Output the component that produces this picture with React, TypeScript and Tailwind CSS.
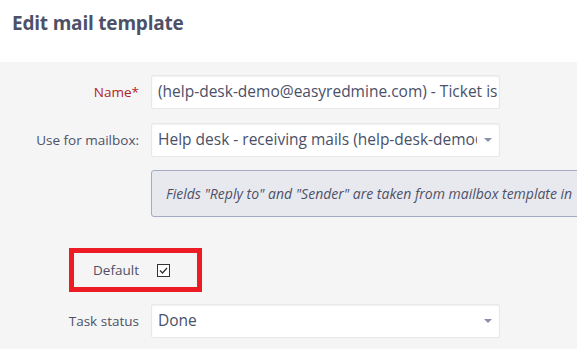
import React from "react";

const font = { fontFamily: "'Open Sans', 'Liberation Sans', sans-serif" };

const Caret = () => (
  <span className="absolute right-[7px] top-1/2 -translate-y-1/2 w-0 h-0 border-l-[4px] border-r-[4px] border-t-[4px] border-l-transparent border-r-transparent border-t-[#8a90a6]" />
);

const Field: React.FC<{ value: string; select?: boolean }> = ({ value, select }) => (
  <div className={`relative w-[349px] h-[34px] bg-white border border-[#e8e8e8] shadow-[inset_0_1px_2px_rgba(0,0,0,0.06)] rounded-[2px] flex items-center pl-[6px] ${select ? "pr-[22px]" : "pr-[1px]"}`}>
    <span className="block text-[15.5px] text-[#4a5068] whitespace-nowrap overflow-hidden">{value}</span>
    {select && <Caret />}
  </div>
);

const Row: React.FC<{ label: React.ReactNode; children: React.ReactNode }> = ({ label, children }) => (
  <div className="flex items-center">
    <div className="w-[139px] text-right text-[13.5px] text-[#4d5167]">{label}</div>
    <div className="ml-[12px]">{children}</div>
  </div>
);

export default function App() {
  return (
    <div className="w-[577px] h-[349px] overflow-hidden bg-white" style={font}>
      <div className="h-[62px] pl-[12px] pt-[9px]">
        <h1 className="text-[19px] font-bold text-[#4d5167] tracking-[-0.2px]">Edit mail template</h1>
      </div>
      <div className="bg-[#f5f5f5] h-[287px] pt-[13px] flex flex-col">
        <Row label={<span className="text-[#b21d1d]">Name*</span>}>
          <Field value="(help-desk-demo@easyredmine.com) - Ticket is solved" />
        </Row>
        <div className="mt-[14px]">
          <Row label="Use for mailbox:">
            <Field value="Help desk - receiving mails (help-desk-demo@easyredmine.com)" select />
          </Row>
        </div>
        <div className="mt-[13px] ml-[151px] w-[460px] h-[47px] bg-[#e8e9ef] border border-[#a4aabf] rounded-[3px] flex items-center pl-[14px]">
          <span className="italic text-[14px] text-[#4d5167] whitespace-nowrap">
            Fields "Reply to" and "Sender" are taken from mailbox template in
          </span>
        </div>
        <div className="relative mt-[31px] h-[44px] flex items-center">
          <div className="w-[139px] text-right text-[13.5px] text-[#4d5167]">Default</div>
          <div className="ml-[18px] w-[13px] h-[13px] border border-[#333] bg-white flex items-center justify-center">
            <svg width="11" height="11" viewBox="0 0 11 11">
              <path d="M2 5.5 L4.5 8 L9 3" fill="none" stroke="#333" strokeWidth="1.3" />
            </svg>
          </div>
          <div className="absolute left-[69px] top-0 w-[133px] h-[44px] border-[5px] border-[#ed1c24]" />
        </div>
        <div className="mt-[12px]">
          <Row label="Task status">
            <Field value="Done" select />
          </Row>
        </div>
      </div>
    </div>
  );
}
